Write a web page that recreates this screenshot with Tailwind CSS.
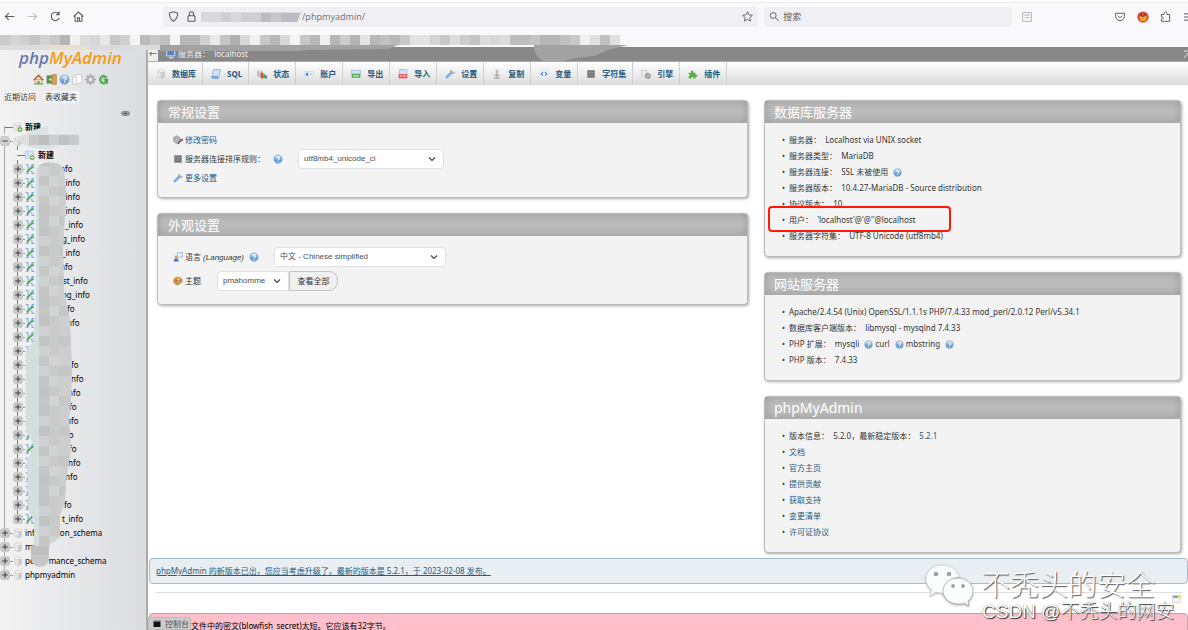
<!DOCTYPE html>
<html lang="zh-CN">
<head>
<meta charset="utf-8">
<meta name="viewport" content="width=device-width, initial-scale=1">
<title>localhost | phpMyAdmin</title>
<script src="https://cdn.jsdelivr.net/npm/@tailwindcss/browser@4"></script>
</head>
<body class="h-screen overflow-hidden bg-white font-['Noto_Sans','Noto_Sans_CJK_SC',sans-serif] text-[8px] leading-4 text-[#333]">

<!-- Icon library -->
<svg class="absolute size-0" aria-hidden="true">
  <defs>
    <linearGradient id="gBlue" x1="0" y1="0" x2="0" y2="1"><stop offset="0" stop-color="#b5d0f0"/><stop offset="1" stop-color="#4f86c6"/></linearGradient>
    <linearGradient id="gCyl" x1="0" y1="0" x2="1" y2="0"><stop offset="0" stop-color="#fafafa"/><stop offset="1" stop-color="#bdbdbd"/></linearGradient>
  </defs>
  <symbol id="help" viewBox="0 0 16 16"><circle cx="8" cy="8" r="7" fill="url(#gBlue)" stroke="#9dbfe4"/><path d="M5.5 6.2C5.6 3.4 10.6 3.4 10.5 6.3 10.4 8 8.2 7.8 8.1 9.6M8 11v2" stroke="#fff" stroke-width="1.9" fill="none"/></symbol>
  <symbol id="db" viewBox="0 0 16 16"><path d="M3 3.5v9c0 3 10 3 10 0v-9z" fill="url(#gCyl)" stroke="#bbb"/><ellipse cx="8" cy="3.5" rx="5" ry="2.2" fill="#f6f6f6" stroke="#c4c4c4"/></symbol>
  <symbol id="dbnew" viewBox="0 0 16 16"><path d="M2 3.5v8c0 3 10 3 10 0v-8z" fill="url(#gCyl)" stroke="#bbb"/><ellipse cx="7" cy="3.5" rx="5" ry="2.2" fill="#f6f6f6" stroke="#c4c4c4"/><circle cx="11.5" cy="12" r="3.8" fill="#5da336"/><path d="M11.5 9.8v4.4M9.3 12h4.4" stroke="#fff" stroke-width="1.4"/></symbol>
  <symbol id="tablenew" viewBox="0 0 16 16"><path d="M1 2h12v11H1z" fill="#e9f2fc" stroke="#8fb9e6"/><path d="M1 5h12M5 2v11M1 9h12" stroke="#a9c9ec"/><circle cx="11.5" cy="12" r="3.8" fill="#5da336"/><path d="M11.5 9.8v4.4M9.3 12h4.4" stroke="#fff" stroke-width="1.4"/></symbol>
  <symbol id="tables" viewBox="0 0 16 16"><path d="M1 1h4v14H1M15 1h-4v5h4M15 15h-4v-5" fill="#e6f0fb" stroke="#6fa5e2" stroke-width="1.6"/><path d="M3 13 13 3" stroke="#55ab49" stroke-width="3.2"/></symbol>
  <symbol id="sql" viewBox="0 0 16 16"><path d="M4 1h11l-2 11H2z" fill="#cfe3f8" stroke="#6d9fd4"/><path d="M1 12h10l1 3H2z" fill="#8db8e6" stroke="#5c8fc8"/></symbol>
  <symbol id="status" viewBox="0 0 16 16"><path d="M1 2v9c0 2 7 2 7 0V2z" fill="#c9c9c9" stroke="#a5a5a5"/><ellipse cx="4.5" cy="2.4" rx="3.5" ry="1.5" fill="#ececec"/><path d="M6 6h4v9H6z" fill="#e04b3c"/><path d="M10 8h3v7h-3z" fill="#55aa3f"/><path d="M13 10h3v5h-3z" fill="#4a7fd0"/></symbol>
  <symbol id="users" viewBox="0 0 16 16"><path d="M1 4h14v9H1z" fill="#f3f6fa" stroke="#c9d4e2"/><path d="M3 6h4v5H3z" fill="#4f8bd0"/><path d="M9 7h4M9 9.500h4" stroke="#9aa"/></symbol>
  <symbol id="export" viewBox="0 0 16 16"><path d="M1 2h14v6H1z" fill="#cfe2f6" stroke="#8caed2"/><path d="M1 8h14v6H1z" fill="#4fa44a"/><path d="M3 11h10" stroke="#d7f2cf" stroke-width="2"/></symbol>
  <symbol id="import" viewBox="0 0 16 16"><path d="M2 1h12v8H2z" fill="#cfe2f6" stroke="#8caed2"/><path d="M1 8h14v7H1z" fill="#e2575a"/><path d="M3 11h3M8 11h5" stroke="#fff" stroke-width="1.5"/></symbol>
  <symbol id="wrench" viewBox="0 0 16 16"><path d="M3 13 9 7" stroke="#7fabe6" stroke-width="4.500" stroke-linecap="round"/><path d="M9 7l3-3" stroke="#a8a8ac" stroke-width="3.500"/><path d="M11 1.500c-2 1-2.500 4 0 5s4 .5 4-2" fill="none" stroke="#a8a8ac" stroke-width="2"/></symbol>
  <symbol id="repl" viewBox="0 0 16 16"><path d="M6 1h4v9H6z" fill="#bdbdbd"/><path d="M4 10h8M8 10v4M3 14.500h10" stroke="#999" stroke-width="1.6"/></symbol>
  <symbol id="vars" viewBox="0 0 16 16"><path d="M1 2h14v12H1z" fill="#f4f8fd" stroke="#cbd8ea"/><path d="M6.500 5 3.500 8l3 3M9.500 5l3 3-3 3" fill="none" stroke="#3f86dc" stroke-width="2"/></symbol>
  <symbol id="charset" viewBox="0 0 16 16"><path d="M2 2h12v12H2z" fill="#777"/><path d="M2 5.500h12M2 9.500h12" stroke="#a2a2a2"/></symbol>
  <symbol id="engine" viewBox="0 0 16 16"><path d="M1 2v8c0 2 8 2 8 0V2z" fill="#ececec" stroke="#bcbcbc"/><circle cx="11" cy="11" r="3.600" fill="#ccc" stroke="#8c8c8c" stroke-width="1.800"/><path d="m8.500 8.500 5 5" stroke="#8c8c8c"/></symbol>
  <symbol id="plugin" viewBox="0 0 16 16"><path d="M1 6h4c-2-5 5-5 3.500 0H12v3c4-1.500 4 4.500 0 3.500V15H8.500c.8-3-3.500-3-3 0H1v-3.500c3 .5 3-3 0-2.500z" fill="#58ab45"/></symbol>
  <symbol id="home" viewBox="0 0 16 16"><path d="M3 8h10v6H3z" fill="#f3e6c6" stroke="#a98"/><path d="M1 9l7-7 7 7" fill="none" stroke="#b3622e" stroke-width="2.200"/><path d="M6.500 10h3v4h-3z" fill="#5b9b43"/><path d="M1 14.500h14" stroke="#67a24a" stroke-width="1.500"/></symbol>
  <symbol id="exit" viewBox="0 0 16 16"><path d="M1 2h8v12H1z" fill="#5a8c4a"/><path d="M9 1h6v14H9z" fill="#d8a558" stroke="#a97831"/><path d="M8 5 3.500 8 8 11z" fill="#c9f0b8"/></symbol>
  <symbol id="doc" viewBox="0 0 16 16"><path d="M4 1h10v13H4z" fill="#fff" stroke="#c2c2c2"/><path d="M1 4h6v11H1z" fill="#f4f4f4" stroke="#c2c2c2"/></symbol>
  <symbol id="gear" viewBox="0 0 16 16"><circle cx="8" cy="8" r="4.500" fill="none" stroke="#b2b2b2" stroke-width="3.500"/><path d="M8 0v3M8 13v3M0 8h3M13 8h3M2.500 2.500l2 2M11.500 11.500l2 2M13.500 2.500l-2 2M4.500 11.500l-2 2" stroke="#a8a8a8" stroke-width="2.200"/></symbol>
  <symbol id="reload" viewBox="0 0 16 16"><path d="M12.500 5.500A5 5 0 1 0 12.500 11" fill="none" stroke="#5fb359" stroke-width="4"/><path d="M15 7H7l7 8z" fill="#4da548"/></symbol>
  <symbol id="passwd" viewBox="0 0 16 16"><path d="M6 1l5 3v6l-5 4-5-4V4z" fill="#b9b9c0" stroke="#808088"/><circle cx="6" cy="7" r="2" fill="#e9e9ee" stroke="#777"/><path d="M8 14l6-7" stroke="#4a4a50" stroke-width="2"/><circle cx="14" cy="8" r="2" fill="#d8432f"/></symbol>
  <symbol id="lang" viewBox="0 0 16 16"><path d="M7 1h8v7h-4l-3 2V8H7z" fill="#eaf3fd" stroke="#6fa0da"/><circle cx="5" cy="8" r="2.600" fill="#d9a066"/><path d="M1 15c0-6 8-6 8 0z" fill="#3d78c4"/></symbol>
  <symbol id="theme" viewBox="0 0 16 16"><path d="M8 2c5 0 7 3 7 6s-4 2-4 4-1 2-3 2c-4 0-7-2-7-6s3-6 7-6z" fill="#e09a4a" stroke="#b8712a"/><circle cx="5" cy="7" r="1.500" fill="#d63a2e"/><circle cx="9" cy="5" r="1.500" fill="#f5e35a"/><circle cx="11.500" cy="8" r="1.500" fill="#4c9fe0"/><circle cx="6" cy="11" r="1.500" fill="#5cb04b"/></symbol>
  <symbol id="chev" viewBox="0 0 16 16"><path d="m2 5 6 6 6-6" fill="none" stroke="#3b4045" stroke-width="2.200"/></symbol>
  <symbol id="plus" viewBox="0 0 16 16"><rect x="1" y="1" width="14" height="14" rx="3" fill="#c9c9c9" stroke="#b5b5b5"/><path d="M8 3.500v9M3.500 8h9" stroke="#444" stroke-width="1.800"/></symbol>
  <symbol id="minus" viewBox="0 0 16 16"><rect x="1" y="1" width="14" height="14" rx="3" fill="#d2d2d2" stroke="#b5b5b5"/><path d="M3.500 8h9" stroke="#555" stroke-width="1.800"/></symbol>
</svg>

<div class="flex h-full flex-col">
  <!-- Browser chrome -->
  <header class="relative z-10 h-[47px] shrink-0 border-t-2 border-white bg-[#f9f9fb]">
    <div class="flex h-7 items-center overflow-hidden border-t border-[#ececee] text-[#5b5b66]">
      <nav class="flex w-[163px] shrink-0 items-center gap-[12px] pl-1">
        <button aria-label="后退"><svg class="size-[11px]" viewBox="0 0 16 16" fill="none" stroke="currentColor" stroke-width="1.600"><path d="M15 8H2M7 3 2 8l5 5"/></svg></button>
        <button aria-label="前进"><svg class="size-[11px] text-[#bdbdc4]" viewBox="0 0 16 16" fill="none" stroke="currentColor" stroke-width="1.600"><path d="M1 8h13M9 3l5 5-5 5"/></svg></button>
        <button aria-label="刷新"><svg class="size-[11px]" viewBox="0 0 16 16" fill="none" stroke="currentColor" stroke-width="1.700"><path d="M13.500 10A6 6 0 1 1 12.500 4"/><path d="M14 0v6H8z" fill="currentColor" stroke="none"/></svg></button>
        <button aria-label="主页"><svg class="size-[11px]" viewBox="0 0 16 16" fill="none" stroke="currentColor" stroke-width="1.500"><path d="M1 8l7-6.500L15 8M3 7v8h10V7M6.500 15v-5h3v5"/></svg></button>
      </nav>
      <div class="flex h-5 flex-[599] items-center rounded-sm bg-[#f0f0f4] px-[5px]">
        <svg class="size-[11px]" viewBox="0 0 16 16" fill="none" stroke="currentColor" stroke-width="1.500"><path d="M8 1l6 2c0 6-1 9-6 12-5-3-6-6-6-12z"/></svg>
        <svg class="ml-[7px] size-[11px]" viewBox="0 0 16 16" fill="none" stroke="currentColor" stroke-width="1.600"><rect x="3" y="7" width="10" height="8" rx="1"/><path d="M5 7V4c0-4 6-4 6 0v3"/></svg>
        <svg class="ml-[2px] h-[10px] w-[103px]" viewBox="0 0 103 10"><path d="M2 0h101l-4 10H2z" fill="#d9d9dc"/><path d="M22 1h10v9H22zM42 1h20v9H42z" fill="#cfcfd2"/><path d="M62 1h10v9H62zM82 1h19l-3 9H82z" fill="#bcbcc0"/><path d="M72 1h10v9H72z" fill="#c8c8cc"/></svg>
        <input type="text" aria-label="地址" value="/phpmyadmin/" class="h-5 min-w-0 flex-1 bg-transparent text-[9px] text-[#77777f] outline-none">
        <button aria-label="收藏"><svg class="size-[11px]" viewBox="0 0 16 16" fill="none" stroke="currentColor" stroke-width="1.300"><path d="m8 1 2.100 4.600 5 .6-3.700 3.400 1 5L8 12.100l-4.400 2.500 1-5L.9 6.200l5-.6z"/></svg></button>
      </div>
      <label class="ml-[6px] flex h-5 flex-[244] items-center gap-[4px] rounded-sm bg-[#f0f0f4] px-[5px]">
        <svg class="size-[11px]" viewBox="0 0 16 16" fill="none" stroke="currentColor" stroke-width="1.500"><circle cx="6.500" cy="6.500" r="4.500"/><path d="m10 10 5 5"/></svg>
        <input type="search" placeholder="搜索" aria-label="搜索" class="h-5 w-full bg-transparent text-[9px] outline-none placeholder:text-[#5b5b66]">
      </label>
      <div class="flex w-[176px] shrink-0 items-center pl-[10px]">
        <svg class="size-[10px] shrink-0 text-[#b0b0b6]" viewBox="0 0 16 16" fill="none" stroke="currentColor" stroke-width="1.500"><path d="M1 1h14v14H1zM4 5h8M4 9h8"/></svg>
        <svg class="ml-[83px] size-[10px] shrink-0" viewBox="0 0 16 16" fill="none" stroke="currentColor" stroke-width="1.600"><path d="M1 2h14v5c0 9-14 9-14 0zM4.500 6 8 9.500 11.500 6"/></svg>
        <svg class="ml-[12px] size-[12px] shrink-0" viewBox="0 0 16 16"><circle cx="8" cy="8" r="7.500" fill="#d9483c"/><path d="M3 9c1-5 9-6 10-1s-5 7-8 5z" fill="#f2a02c"/><path d="M4 3l4 3 4-3v3l-4 2-4-2z" fill="#8c3b26"/></svg>
        <svg class="ml-[11px] size-[11px] shrink-0" viewBox="0 0 16 16" fill="none" stroke="currentColor" stroke-width="1.400"><path d="M2 5h4c-1-5 5-5 4 0h4v10H2v-3.500c3.500 1 3.500-4 0-3z"/></svg>
        <svg class="ml-[13px] size-[10px] shrink-0" viewBox="0 0 16 16" stroke="currentColor" stroke-width="1.600"><path d="M0 3h16M0 8h16M0 13h16"/></svg>
      </div>
    </div>
    <!-- Bookmarks strip -->
    <svg id="strip" class="pointer-events-none absolute left-0 top-[31px] h-[32px] w-[640px]" viewBox="0 0 640 32" aria-hidden="true"></svg>
  </header>

  <div class="flex min-h-0 flex-1">
    <!-- Navigation -->
    <aside class="relative w-[148px] shrink-0 overflow-hidden border-r-2 border-[#ababab] bg-linear-to-r from-[#f3f3f3] to-[#dadce0] text-black">
      <a href="#" class="block pt-[1px] pr-[5px] text-center font-['Open_Sans'] text-[17px] font-semibold italic leading-5 text-[#f89c0e]"><span class="text-[#6c78af]">php</span>MyAdmin</a>
      <nav class="flex gap-[2px] pl-[33px] pt-[6px]">
        <a href="#" aria-label="主页"><svg class="size-[11px]"><use href="#home"/></svg></a>
        <a href="#" aria-label="退出"><svg class="size-[11px]"><use href="#exit"/></svg></a>
        <a href="#" aria-label="帮助"><svg class="size-[11px]"><use href="#help"/></svg></a>
        <a href="#" aria-label="文档"><svg class="size-[11px]"><use href="#doc"/></svg></a>
        <a href="#" aria-label="设置"><svg class="size-[11px]"><use href="#gear"/></svg></a>
        <a href="#" aria-label="刷新"><svg class="size-[11px]"><use href="#reload"/></svg></a>
      </nav>
      <div class="flex gap-[3px] pl-[1px] pt-[5px] text-[#333]">
        <button class="rounded-sm border border-[#ececec] bg-[#f4f4f4] px-[2px] leading-3">近期访问</button>
        <button class="rounded-sm border border-[#ececec] bg-[#f4f4f4] px-[2px] leading-3">表收藏夹</button>
      </div>
      <div class="flex h-[16px] items-center justify-end pr-4 pt-[3px]"><svg class="h-[5px] w-[9px]" viewBox="0 0 9 5"><rect x=".5" y=".5" width="8" height="4" rx="2" fill="#999" stroke="#888"/><path d="M3 2.500h3" stroke="#444"/></svg></div>
      <div class="relative">
        <ul id="tree"></ul>
        <svg id="treeMask" class="pointer-events-none absolute left-0 top-0 h-[462px] w-[110px]" viewBox="0 0 110 462" aria-hidden="true"></svg>
      </div>
    </aside>

    <!-- Main panel -->
    <main class="relative flex min-w-0 flex-1 flex-col overflow-hidden">
      <div class="flex h-[15px] shrink-0 items-center border-b border-[#aaa] bg-[#888] text-[#eee]">
        <button class="flex h-full w-[10px] items-center justify-center bg-[#eee] leading-none text-[#333]" aria-label="收起">←</button>
        <svg class="ml-[8px] size-[10px]" viewBox="0 0 16 16"><path d="M1 2h13v9H1z" fill="#4f86d0" stroke="#d5e2f4" stroke-width="1.500"/><path d="M5 14h7" stroke="#ddd" stroke-width="2"/></svg>
        <a href="#" class="ml-[2px]">服务器：&nbsp; localhost</a>
        <svg class="ml-auto h-[8px] w-[5px]" viewBox="0 0 5 8"><path d="M1 1h4M1 8l4-5" stroke="#ddd" fill="none"/></svg>
      </div>
      <nav id="tabs" class="flex h-[23px] shrink-0 bg-linear-to-b from-white to-[#dcdcdc] font-bold text-[#235a81]"></nav>

      <div class="grid shrink-0 grid-cols-[591fr_417fr] items-start gap-4 pl-[9px] pr-[7px] pt-[15px]">
        <div class="flex flex-col gap-[15px]">
          <section class="rounded-sm border border-[#bbb] bg-[#f3f3f3] shadow-[1px_1px_3px_#aaa]">
            <h2 class="h-[22px] border-b border-[#aaa] bg-[#bbb] pl-[10px] text-[13px] leading-[22px] text-white shadow-[inset_0_0_8px_#999]">常规设置</h2>
            <div class="flex flex-col gap-[1px] pb-[11px] pl-[15px] pt-[9px]">
              <a href="#" class="flex items-center gap-[2px] text-[#235a81]"><svg class="size-[10px]"><use href="#passwd"/></svg>修改密码</a>
              <div class="flex h-5 items-center">
                <svg class="mr-[2px] size-[10px]"><use href="#charset"/></svg><label for="collation">服务器连接排序规则：</label>
                <svg class="ml-[8px] size-[10px]"><use href="#help"/></svg>
                <div class="relative ml-[15px] w-[146px]">
                  <select id="collation" class="h-5 w-full appearance-none rounded-sm border border-[#dee2e6] bg-white pl-[5px] font-['Liberation_Sans','Noto_Sans_CJK_SC',sans-serif] text-[#495057]"><option>utf8mb4_unicode_ci</option></select>
                  <svg class="pointer-events-none absolute right-2 top-[6px] size-[8px]"><use href="#chev"/></svg>
                </div>
              </div>
              <a href="#" class="flex items-center gap-[2px] text-[#235a81]"><svg class="size-[10px]"><use href="#wrench"/></svg>更多设置</a>
            </div>
          </section>
          <section class="rounded-sm border border-[#bbb] bg-[#f3f3f3] shadow-[1px_1px_3px_#aaa]">
            <h2 class="h-[22px] border-b border-[#aaa] bg-[#bbb] pl-[10px] text-[13px] leading-[22px] text-white shadow-[inset_0_0_8px_#999]">外观设置</h2>
            <div class="flex flex-col gap-[4px] pb-[13px] pl-[15px] pt-[11px]">
              <div class="flex h-5 items-center">
                <svg class="mr-[2px] size-[10px]"><use href="#lang"/></svg><label for="language">语言 <i class="font-['Liberation_Sans']">(Language)</i></label>
                <svg class="ml-[5px] size-[10px]"><use href="#help"/></svg>
                <div class="relative ml-[15px] w-[172px]">
                  <select id="language" class="h-5 w-full appearance-none rounded-sm border border-[#dee2e6] bg-white pl-[5px] font-['Liberation_Sans','Noto_Sans_CJK_SC',sans-serif] text-[#495057]"><option>中文 - Chinese simplified</option></select>
                  <svg class="pointer-events-none absolute right-2 top-[6px] size-[8px]"><use href="#chev"/></svg>
                </div>
              </div>
              <div class="flex h-5 items-center">
                <svg class="mr-[2px] size-[10px]"><use href="#theme"/></svg><label for="theme-sel">主题</label>
                <div class="relative ml-[16px] w-[72px]">
                  <select id="theme-sel" class="h-5 w-full appearance-none rounded-l-sm border border-[#dee2e6] bg-white pl-[5px] font-['Liberation_Sans','Noto_Sans_CJK_SC',sans-serif] text-[#495057]"><option>pmahomme</option></select>
                  <svg class="pointer-events-none absolute right-2 top-[6px] size-[8px]"><use href="#chev"/></svg>
                </div>
                <button class="h-5 w-[49px] rounded-r-[9px] border border-[#c4c4c4] bg-[#f0f0f0]">查看全部</button>
              </div>
            </div>
          </section>
        </div>

        <div class="flex flex-col gap-[15px]">
          <section class="rounded-sm border border-[#bbb] bg-[#f3f3f3] shadow-[1px_1px_3px_#aaa]">
            <h2 class="h-[22px] border-b border-[#aaa] bg-[#bbb] pl-[9px] text-[13px] leading-[22px] text-white shadow-[inset_0_0_8px_#999]">数据库服务器</h2>
            <ul class="pb-[12px] pl-[24px] pt-[9px] *:relative *:before:absolute *:before:-left-[7px] *:before:content-['•']">
              <li>服务器：&nbsp; Localhost via UNIX socket</li>
              <li>服务器类型：&nbsp; MariaDB</li>
              <li>服务器连接：&nbsp; SSL 未被使用 <svg class="ml-[3px] inline size-[9px]"><use href="#help"/></svg></li>
              <li>服务器版本：&nbsp; 10.4.27-MariaDB - Source distribution</li>
              <li>协议版本：&nbsp; 10</li>
              <li>用户：&nbsp; 'localhost'@'@''@localhost<span class="absolute -left-[21px] -top-[6px] h-[26px] w-[183px] rounded-sm border-2 border-[#ff1708]"></span></li>
              <li>服务器字符集：&nbsp; UTF-8 Unicode (utf8mb4)</li>
            </ul>
          </section>
          <section class="rounded-sm border border-[#bbb] bg-[#f3f3f3] shadow-[1px_1px_3px_#aaa]">
            <h2 class="h-[22px] border-b border-[#aaa] bg-[#bbb] pl-[9px] text-[13px] leading-[22px] text-white shadow-[inset_0_0_8px_#999]">网站服务器</h2>
            <ul class="pb-[12px] pl-[24px] pt-[9px] *:relative *:before:absolute *:before:-left-[7px] *:before:content-['•']">
              <li>Apache/2.4.54 (Unix) OpenSSL/1.1.1s PHP/7.4.33 mod_perl/2.0.12 Perl/v5.34.1</li>
              <li>数据库客户端版本：&nbsp; libmysql - mysqlnd 7.4.33</li>
              <li>PHP 扩展：&nbsp; mysqli <svg class="ml-[3px] inline size-[9px]"><use href="#help"/></svg> curl <svg class="ml-[3px] inline size-[9px]"><use href="#help"/></svg> mbstring <svg class="ml-[3px] inline size-[9px]"><use href="#help"/></svg></li>
              <li>PHP 版本：&nbsp; 7.4.33</li>
            </ul>
          </section>
          <section class="rounded-sm border border-[#bbb] bg-[#f3f3f3] shadow-[1px_1px_3px_#aaa]">
            <h2 class="h-[22px] border-b border-[#aaa] bg-[#bbb] pl-[9px] text-[14px] leading-[22px] text-white shadow-[inset_0_0_8px_#999]">phpMyAdmin</h2>
            <ul class="pb-[12px] pl-[24px] pt-[9px] *:relative *:before:absolute *:before:-left-[7px] *:before:content-['•']">
              <li>版本信息：&nbsp; 5.2.0，最新稳定版本：&nbsp; <a href="#" class="text-[#235a81]">5.2.1</a></li>
              <li><a href="#" class="text-[#235a81]">文档</a></li>
              <li><a href="#" class="text-[#235a81]">官方主页</a></li>
              <li><a href="#" class="text-[#235a81]">提供贡献</a></li>
              <li><a href="#" class="text-[#235a81]">获取支持</a></li>
              <li><a href="#" class="text-[#235a81]">变更清单</a></li>
              <li><a href="#" class="text-[#235a81]">许可证协议</a></li>
            </ul>
          </section>
        </div>
      </div>

      <div class="ml-[1px] mt-[5px] shrink-0 rounded-sm border border-[#a2bfc9] bg-[#e8eef1] px-[6px] py-1"><a href="#" class="text-[#235a81] underline">phpMyAdmin 的新版本已出，您应当考虑升级了。最新的版本是 5.2.1，于 2023-02-08 发布。</a></div>
      <hr class="ml-2 mr-[6px] mt-2 shrink-0 border-[#ddd]">
      <div class="flex h-5 shrink-0 items-start justify-end pr-[6px] pt-[1px]"><button aria-label="新窗口"><svg class="size-[10px]" viewBox="0 0 16 16"><path d="M1 2h12v12H1z" fill="#f2f2f2" stroke="#c4c4c4"/><path d="M2 3h8v3H2z" fill="#6e90d8"/><circle cx="12.500" cy="4" r="3" fill="#f6ea4a"/></svg></button></div>
      <div class="ml-[1px] h-10 shrink-0 rounded-t-sm border border-[#aaa] bg-[#ffc0cb] pl-[41px] pt-[4px] text-black">文件中的密文(blowfish_secret)太短。它应该有32字节。</div>
      <button class="absolute bottom-0 left-0 flex h-[13px] w-[43px] items-center gap-[4px] rounded-tr-sm border border-[#bbb] bg-[#ccc] pl-1 whitespace-nowrap text-[#555]"><svg class="size-[8px]" viewBox="0 0 16 16"><path d="M1 2h14v12H1z" fill="#111"/><path d="M1 2h14" stroke="#888" stroke-width="3"/></svg>控制台</button>

      <!-- Watermarks -->
      <div class="pointer-events-none absolute bottom-0 right-[13px] w-[250px] font-['Liberation_Sans','Noto_Sans_CJK_SC',sans-serif] text-white">
        <div class="flex items-start gap-[8px]">
          <svg class="mt-[3px] h-[42px] w-[48px] drop-shadow-[0_1px_1px_#aaa]" viewBox="0 0 48 42"><path d="M17 1C8 1 1 7 1 15c0 5 3 9 6 11l-2 6 6-4c3 1 7 1 10 1C19 20 26 13 34 13 32 6 26 1 17 1z" fill="#fbfcfc" stroke="#ccc" stroke-width=".6"/><path d="M33 14c-9 0-15 6-15 13s7 13 15 13c2 0 4 0 6-1l5 3-1-5c3-2 5-6 5-10 0-7-7-13-15-13z" fill="#fbfcfc" stroke="#aaa" stroke-width=".8"/><g fill="#9aa1a4"><circle cx="11" cy="10" r="2.300"/><circle cx="24" cy="10" r="2.300"/><circle cx="28" cy="22" r="1.900"/><circle cx="38" cy="22" r="1.900"/></g></svg>
          <span class="pt-[9px] text-[29px] font-light leading-[32px] whitespace-nowrap [text-shadow:1px_1px_1px_#555]">不秃头的安全</span>
        </div>
        <div class="-mt-[6px] pb-[6px] pl-[57px] text-[19px] font-light leading-[24px] whitespace-nowrap [text-shadow:1px_1px_1px_#333,0_0_1px_#666]">CSDN @不秃头的网安</div>
      </div>
    </main>
  </div>
</div>

<script>
// Top tabs
document.getElementById('tabs').innerHTML = [
  ['db','数据库'],['sql','SQL'],['status','状态'],['users','账户'],['export','导出'],['import','导入'],
  ['wrench','设置'],['repl','复制'],['vars','变量'],['charset','字符集'],['engine','引擎'],['plugin','插件']
].map(([i, t]) => `<a href="#" class="flex items-center gap-[6px] border-r border-[#d0d0d0] pl-2 pr-[6px]"><svg class="size-[10px]"><use href="#${i}"/></svg>${t}</a>`).join('');

// Database tree: [visible table-name tail, left edge of that tail]
const tables = [['nfo',60],['_info',62],['_info',62],['_info',62],['_info',65],['g_info',62],['_info',62],['nfo',60],['st_info',63],
  ['og_info',62],['nfo',62],['nfo',67],['',0],['',0],['fo',71],['nfo',71],['nfo',68],['fo',69],['nfo',66],['fo',66],['fo',69],['nfo',68],['nfo',65],['',0],['fo',64],['t_info',62]];
const rootRow = (name) => `<li class="flex h-[14px] items-center"><svg class="size-[10px]"><use href="#plus"/></svg><span class="h-px w-[3px] bg-[#999]"></span><svg class="size-[10px]"><use href="#db"/></svg><a href="#" class="ml-[2px]">${name}</a></li>`;
document.getElementById('tree').innerHTML =
  `<li class="flex h-[14px] items-center"><span class="ml-1 h-px w-[9px] bg-[#777]"></span><svg class="size-[10px]"><use href="#dbnew"/></svg><a href="#" class="ml-[2px] font-bold">新建</a></li>` +
  `<li class="flex h-[14px] items-center"><svg class="size-[10px]"><use href="#minus"/></svg><span class="h-px w-[3px] bg-[#999]"></span><svg class="size-[10px]"><use href="#db"/></svg></li>` +
  `<li class="flex h-[14px] items-center"><span class="ml-[17px] h-px w-[8px] bg-[#777]"></span><svg class="size-[10px]"><use href="#tablenew"/></svg><a href="#" class="ml-[3px] font-bold">新建</a></li>` +
  tables.map(([t, x]) => `<li class="flex h-[14px] items-center"><svg class="ml-[13px] size-[10px] shrink-0"><use href="#plus"/></svg><span class="h-px w-[2px] bg-[#999]"></span><svg class="size-[10px] shrink-0"><use href="#tables"/></svg><span class="shrink-0" style="width:${Math.max(0, x - 35)}px"></span><a href="#">${t}</a></li>`).join('') +
  ['information_schema', 'mysql', 'performance_schema', 'phpmyadmin'].map(rootRow).join('');

// Pixelated cover over the table names, with the tree's guide lines
const rect = (x, y, w, h, c) => `<rect x="${x}" y="${y}" width="${w}" height="${h}" fill="${c}"/>`;
const shades = ['#c2c4c4','#c9cbcb','#dadcdc','#c5c7c7','#d2d4d4','#bec0c0','#cfd1d1','#c9cbcb','#dcdede'];
let m = '<path d="M4.500 6v8M4.500 26v382M4.500 418v4M4.500 432v4M4.500 446v4" stroke="#aaa"/><path d="M17.500 26v18M17.500 54V400" stroke="#777" stroke-dasharray="4 10"/>';
m += '<defs><clipPath id="cov"><path d="M36 50C38 40 62 40 64 50L66 76 63 130 64 170 70 200 72 250 71 280 69 300 71 330 66 360 65 382 60 396 60 418 50 424 48 430H34L34 400 28 390 27 340 35 326 26 312V230L33 222 34 205 36 190Z"/></clipPath></defs><g clip-path="url(#cov)">' + rect(20, 34, 60, 430, '#d3dfdc');
for (let r = 0; r < 40; r++) for (let c = 0; c < 4; c++) m += rect(39 + c * 10, 36 + r * 10, 10, 10, c >= 2 ? (r % 3 ? '#cdcfcf' : '#c6c8c8') : shades[(r * 5 + (r % 3) + c) % 9]);
m += '</g><path d="M18 18l12-7 18-5v8h30q4 5 0 11H58l-8 4h-10l-10-2q-12-4-12-9z" fill="#dde0e0"/>';
m += ['#c6c8c8','#bcbebe','#cdcfcf','#c0c2c2','#c9cbcb'].map((c, i) => rect(29 + i * 10, 15, 10, 10, c)).join('');
m += '<path d="M31 426h18v10q0 11-9 11t-9-11z" fill="#c6c8c8"/>' + rect(31, 426, 18, 9, '#bfc1c1');
document.getElementById('treeMask').innerHTML = m;

// Pixelated bookmark names
const marks = 'cb d4 cf c5 d2 c9 b4 f0 dc d8 e8 c6 d0 f4 bb c8 c0 f4 b8 b8 d0 ea c4 b0 d8 f0 c8 b8 d8 f4 c8 b8 f0 b6 cc b4 e4 b8 c0 b8 c8 e2 e2 d4 c8 dc cc c4 dc d8 dc bc bc c4 b6 b6 c0 c8 f0 e0 c0 e0'.split(' ');
document.getElementById('strip').innerHTML =
  rect(0, 12, 160, 5, '#dcdcde') + rect(50, 12, 40, 5, '#e9dfd0') +
  '<path d="M160 12h238l-10 4-80 1-10 1H160z" fill="#a2a2a2"/><path d="M534 12h94l-20 5-14 6-18 2-12 3h-20q-10-4-10-16z" fill="#a2a2a2"/>' +
  marks.map((s, i) => rect(i * 10, 2, 10, 10, '#' + s + s + s)).join('');
</script>
</body>
</html>
